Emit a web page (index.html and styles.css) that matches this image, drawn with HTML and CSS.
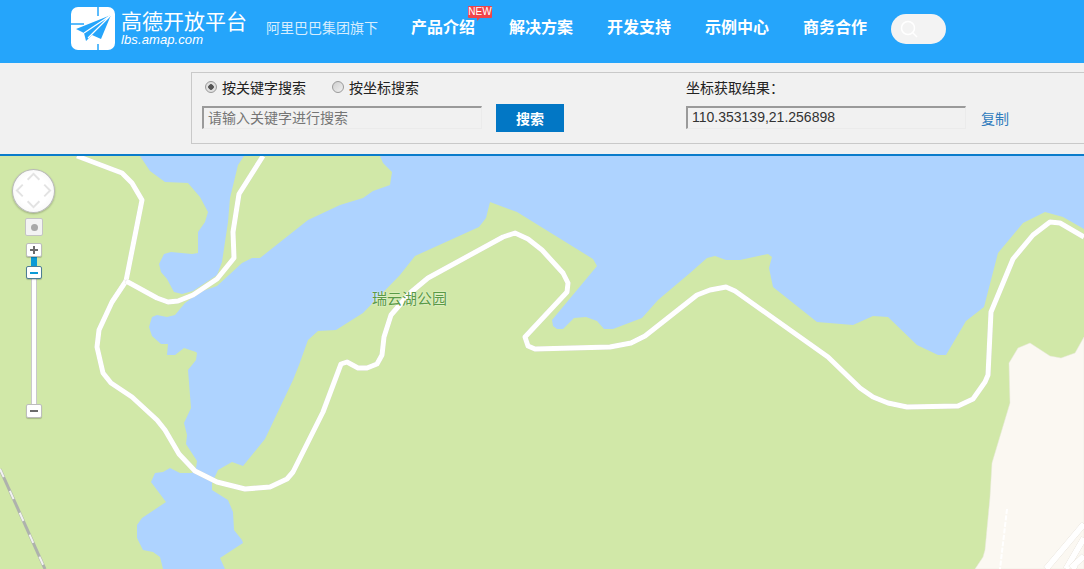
FILE: index.html
```html
<!DOCTYPE html>
<html lang="zh-CN">
<head>
    <meta charset="UTF-8">
    <title>坐标拾取器</title>
    <link rel="stylesheet" href="styles.css">
</head>
<body>
    <header class="topbar">
        <a class="logo" href="#">
            <svg class="logo-mark" viewBox="0 0 44 43" width="44" height="43">
                <rect fill="#fff" width="44" height="43" rx="7"/>
                <path fill="none" stroke="#25a5fb" stroke-width="1.5" d="M27 0V9M27 37V43M0 17H13"/>
                <path fill="#25a5fb" d="M40 8L5 22L13 26L15 34L21 28L30 32Z"/>
                <path fill="none" stroke="#fff" stroke-width="1.2" d="M40 8L13 26M40 8L17 31"/>
            </svg>
            <span class="logo-text">
                <span class="logo-name">高德开放平台</span>
                <span class="logo-url">lbs.amap.com</span>
            </span>
        </a>
        <span class="slogan">阿里巴巴集团旗下</span>
        <nav class="nav">
            <a href="#" class="nav-new">产品介绍<span class="badge">NEW</span></a>
            <a href="#">解决方案</a>
            <a href="#">开发支持</a>
            <a href="#">示例中心</a>
            <a href="#">商务合作</a>
        </nav>
        <div class="search-pill">
            <svg viewBox="0 0 20 20" width="20" height="20">
                <circle cx="9" cy="9" r="6.5" fill="none" stroke="#fff" stroke-width="1.5"/>
                <path d="M14 14L18 18" stroke="#fff" stroke-width="1.5"/>
            </svg>
        </div>
    </header>

    <section class="picker">
        <div class="picker-box">
            <div class="col col-search">
                <div class="radios">
                    <label class="radio on"><i></i>按关键字搜索</label>
                    <label class="radio"><i></i>按坐标搜索</label>
                </div>
                <div class="row">
                    <div class="field">请输入关键字进行搜索</div>
                    <button class="btn">搜索</button>
                </div>
            </div>
            <div class="col col-result">
                <div class="result-title">坐标获取结果：</div>
                <div class="row">
                    <div class="field field-value">110.353139,21.256898</div>
                    <a class="copy" href="#">复制</a>
                </div>
            </div>
        </div>
    </section>

    <main class="map">
        <svg class="map-svg" viewBox="0 156 1084 413" width="1084" height="413">
            <rect class="land" x="0" y="156" width="1084" height="413"/>
            <!-- lagoon top left -->
            <polygon class="water" points="140,156 150,171 165,182 188,183 200,197 208,212 205,222 198,232 198,253 192,254 171,252 164,254 159,264 161,272 167,279 174,292 182,294 193,291 217,275 222,262 228,222 230,198 238,165 244,156"/>
            <!-- main lake with the lower pond -->
            <polygon class="water" points="380,156 383,163 392,172 390,185 373,191 363,198 340,205 308,220 260,258 252,258 242,263 217,286 200,292 185,303 175,315 167,317 157,315 152,317 149,327 152,336 161,344 168,344 167,355 175,355 184,348 196,352 197,353 196,360 188,370 191,408 184,423 187,435 186,444 197,461 196,468 192,473 180,473 170,468 163,472 155,473 151,482 166,502 142,518 137,525 137,538 143,550 153,552 160,557 163,569 225,569 220,558 243,543 242,540 234,530 233,512 228,500 212,490 212,483 218,470 232,462 243,466 265,439 293,380 299,365 308,340 318,331 336,330 363,313 400,275 415,256 479,227 486,218 490,202 517,212 593,259 597,266 552,320 553,326 557,329 563,329 574,318 586,317 597,321 604,329 613,329 642,318 658,300 690,273 707,258 715,256 726,260 740,260 768,254 772,257 769,268 773,287 817,322 853,325 873,316 888,317 917,345 938,355 946,355 966,321 984,307 998,253 1023,223 1045,212 1063,217 1084,229 1084,156"/>
            <!-- built up area bottom right -->
            <polygon class="urban" points="1009,363 1018,348 1030,343 1050,356 1061,358 1075,353 1084,337 1084,569 975,569 983,557 985,550 990,497 992,463 1010,403"/>
            <g class="city-roads">
                <path d="M1084,524L1046,569"/>
                <path d="M1084,538L1066,569"/>
                <path d="M1084,556L1073,566L1076,569"/>
            </g>
            <path class="path-dash" d="M1007,509L1000,569"/>
            <path class="rail" d="M0,469L45,569"/>
            <path class="rail-dash" d="M0,469L45,569"/>
            <g class="roads">
                <path d="M77,156L122,173L132,183L142,200L126,281"/>
                <path d="M126,281L112,302L99,330L97,347L103,373L111,383L132,397L157,420L165,430L179,454L195,471L217,482L245,489L270,487L287,479L293,472L323,412L341,364L347,362L358,368L367,368L377,364L382,355L384,337L391,315L410,293L428,278L503,237L515,233L528,239L542,250L563,273L568,283L567,292L525,337L528,346L535,349L610,347L631,343L645,336L697,295L710,290L726,287L735,291L828,357L860,388L873,397L888,403L907,407L958,406L973,399L985,382L988,375L991,312L1013,259L1033,235L1050,222L1060,223L1084,237"/>
                <path d="M126,281L157,298L168,302L178,301L193,295L217,279L234,258L233,232L239,194L263,156"/>
            </g>
        </svg>

        <span class="map-label">瑞云湖公园</span>

        <div class="map-ctrl">
            <div class="pan">
                <svg viewBox="0 0 44 44" width="43" height="43">
                    <path d="M16 11L22 5L28 11M16 33L22 39L28 33M11 16L5 22L11 28M33 16L39 22L33 28" fill="none" stroke="#e3e3e3" stroke-width="2"/>
                </svg>
            </div>
            <div class="locate"><i></i></div>
            <div class="zoom">
                <div class="zoom-btn zoom-plus"><b></b><b></b></div>
                <div class="zoom-level"></div>
                <div class="zoom-btn zoom-thumb"><b></b></div>
                <div class="zoom-track"></div>
                <div class="zoom-btn zoom-minus"><b></b></div>
            </div>
        </div>
    </main>
</body>
</html>
```

FILE: styles.css
```css
* {
    box-sizing: border-box;
}
html, body {
    margin: 0;
    height: 100%;
    overflow: hidden;
}
body {
    font-family: "Noto Sans CJK SC", "Liberation Sans", sans-serif;
    font-size: 14px;
    color: #333;
    background: #f1f1f1;
}
a {
    text-decoration: none;
    color: inherit;
}

/* top bar */
.topbar {
    display: flex;
    align-items: center;
    height: 63px;
    padding-left: 71px;
    background: #25a5fb;
    color: #fff;
}
.logo {
    display: flex;
    align-items: center;
    height: 43px;
    margin-top: -7px;
}
.logo-mark {
    flex: none;
}
.logo-text {
    display: flex;
    flex-direction: column;
    margin-left: 6px;
}
.logo-name {
    margin-top: -2px;
    font-size: 21px;
    font-weight: 400;
    line-height: 22px;
    width: 126px;
    white-space: nowrap;
}
.logo-url {
    margin-top: 2px;
    font-family: "Liberation Sans", sans-serif;
    font-size: 13px;
    font-style: italic;
    line-height: 13px;
    letter-spacing: 0.1px;
}
.slogan {
    margin-left: 19px;
    margin-top: -9px;
    font-size: 14px;
    color: #d6edfe;
}
.nav {
    display: flex;
    gap: 34px;
    margin-left: 33px;
    margin-top: -11px;
}
.nav a {
    position: relative;
    font-size: 16px;
    font-weight: 700;
    white-space: nowrap;
}
.badge {
    position: absolute;
    left: 57px;
    top: -8px;
    width: 24px;
    height: 12px;
    background: #f0444a;
    border-radius: 1px;
    font-family: "Liberation Sans", sans-serif;
    font-size: 10px;
    font-weight: 400;
    line-height: 12px;
    text-align: center;
}
.badge::after {
    content: "";
    position: absolute;
    left: 9px;
    bottom: -3px;
    border-top: 3px solid #f0444a;
    border-right: 3px solid transparent;
}
.search-pill {
    display: flex;
    align-items: center;
    width: 55px;
    height: 30px;
    margin-left: 24px;
    margin-top: -5px;
    padding-left: 8px;
    background: #f3f3f3;
    border-radius: 15px;
}

/* search strip */
.picker {
    height: 93px;
    padding: 9px 0 10px 191px;
    background: #f1f1f1;
    border-bottom: 2px solid #0a7ccb;
}
.picker-box {
    display: flex;
    height: 72px;
    border: 1px solid #c9c9c9;
    border-right: 0;
    padding-top: 4px;
}
.col-search {
    width: 494px;
    padding-left: 10px;
}
.row {
    display: flex;
    align-items: center;
    height: 28px;
}
.radios {
    display: flex;
    height: 20px;
    margin-bottom: 7px;
    padding-left: 3px;
}
.radio {
    display: flex;
    align-items: center;
    margin-right: 26px;
    line-height: 20px;
    color: #222;
}
.radio i {
    width: 12px;
    height: 12px;
    margin-right: 5px;
    border: 1px solid #9a9a9a;
    border-radius: 50%;
    background: linear-gradient(135deg, #cfcfcf, #f0f0f0);
}
.radio.on i {
    background: radial-gradient(circle, #555 0 2.5px, #e0e0e0 3px);
}
.field {
    width: 280px;
    height: 23px;
    margin-bottom: 1px;
    padding-left: 4px;
    border: 2px solid #9a9a9a;
    border-right: 1px solid #ebebeb;
    border-bottom: 1px solid #ebebeb;
    color: #757575;
    line-height: 19px;
    white-space: nowrap;
}
.btn {
    width: 68px;
    height: 28px;
    margin-left: 14px;
    border: 0;
    background: #0277c5;
    color: #fff;
    font-family: inherit;
    font-size: 14px;
    font-weight: 700;
}
.result-title {
    height: 20px;
    margin-bottom: 7px;
    line-height: 20px;
    color: #222;
}
.field-value {
    font-family: "Liberation Sans", sans-serif;
    color: #333;
}
.copy {
    margin-left: 15px;
    margin-bottom: 1px;
    color: #2f7bbd;
}

/* map */
.map {
    position: relative;
    height: 413px;
    overflow: hidden;
}
.map-svg {
    display: block;
}
.land {
    fill: #d1e8a8;
}
.water {
    fill: #aed3ff;
}
.urban {
    fill: #fbf8f2;
    stroke: #e8e8dc;
    stroke-width: 0.5;
}
.roads path {
    fill: none;
    stroke: #fff;
    stroke-width: 5;
    stroke-linejoin: round;
    filter: drop-shadow(0 0 0.4px #c8c8c0);
}
.city-roads path {
    fill: none;
    stroke: #fff;
    stroke-width: 6;
    filter: drop-shadow(0 0 0.5px #c9bfae);
}
.path-dash {
    fill: none;
    stroke: #fff;
    stroke-width: 2;
    stroke-dasharray: 5 1.5;
}
.rail {
    fill: none;
    stroke: #aeb2ad;
    stroke-width: 3;
}
.rail-dash {
    fill: none;
    stroke: #f2f2f2;
    stroke-width: 2;
    stroke-dasharray: 9 15;
}
.map-label {
    position: absolute;
    left: 372px;
    top: 133px;
    font-size: 15px;
    line-height: 18px;
    font-weight: 400;
    color: #5a9a46;
    text-shadow: 0 0 2px #fff;
    white-space: nowrap;
}

/* map controls */
.map-ctrl {
    position: absolute;
    left: 11px;
    top: 13px;
    width: 44px;
}
.pan {
    width: 43px;
    height: 44px;
    margin-left: 1px;
    border: 1px solid #b9b9b9;
    border-radius: 50%;
    background: radial-gradient(circle, #fff 50%, #f2f2f2);
    box-shadow: 0 1px 2px rgba(0, 0, 0, 0.25);
    overflow: hidden;
}
.pan svg {
    display: block;
    margin: -1px;
}
.locate {
    display: flex;
    align-items: center;
    justify-content: center;
    width: 18px;
    height: 18px;
    margin: 5px 0 0 14px;
    border: 1px solid #c4c4c4;
    border-radius: 2px;
    background: #f3f3f3;
}
.locate i {
    width: 7px;
    height: 7px;
    border-radius: 50%;
    background: #a9a9a9;
}
.zoom {
    display: flex;
    flex-direction: column;
    align-items: center;
    width: 16px;
    margin: 7px 0 0 15px;
}
.zoom-btn {
    position: relative;
    flex: none;
    width: 16px;
    height: 14px;
    border: 1px solid #bdbdbd;
    border-radius: 2px;
    background: #fff;
    box-shadow: 0 1px 1px rgba(0, 0, 0, 0.2);
}
.zoom-btn b {
    position: absolute;
    left: 3px;
    top: 5px;
    width: 8px;
    height: 2px;
    background: #6b6b6b;
}
.zoom-plus b + b {
    left: 6px;
    top: 2px;
    width: 2px;
    height: 8px;
}
.zoom-level {
    width: 6px;
    height: 9px;
    background: #0b9ad6;
}
.zoom-thumb {
    height: 13px;
    border-color: #4d7d93;
}
.zoom-thumb b {
    background: #0b9ad6;
}
.zoom-track {
    width: 6px;
    height: 125px;
    background: #fff;
    border-left: 1px solid #c9c9c9;
    border-right: 1px solid #c9c9c9;
}
```
